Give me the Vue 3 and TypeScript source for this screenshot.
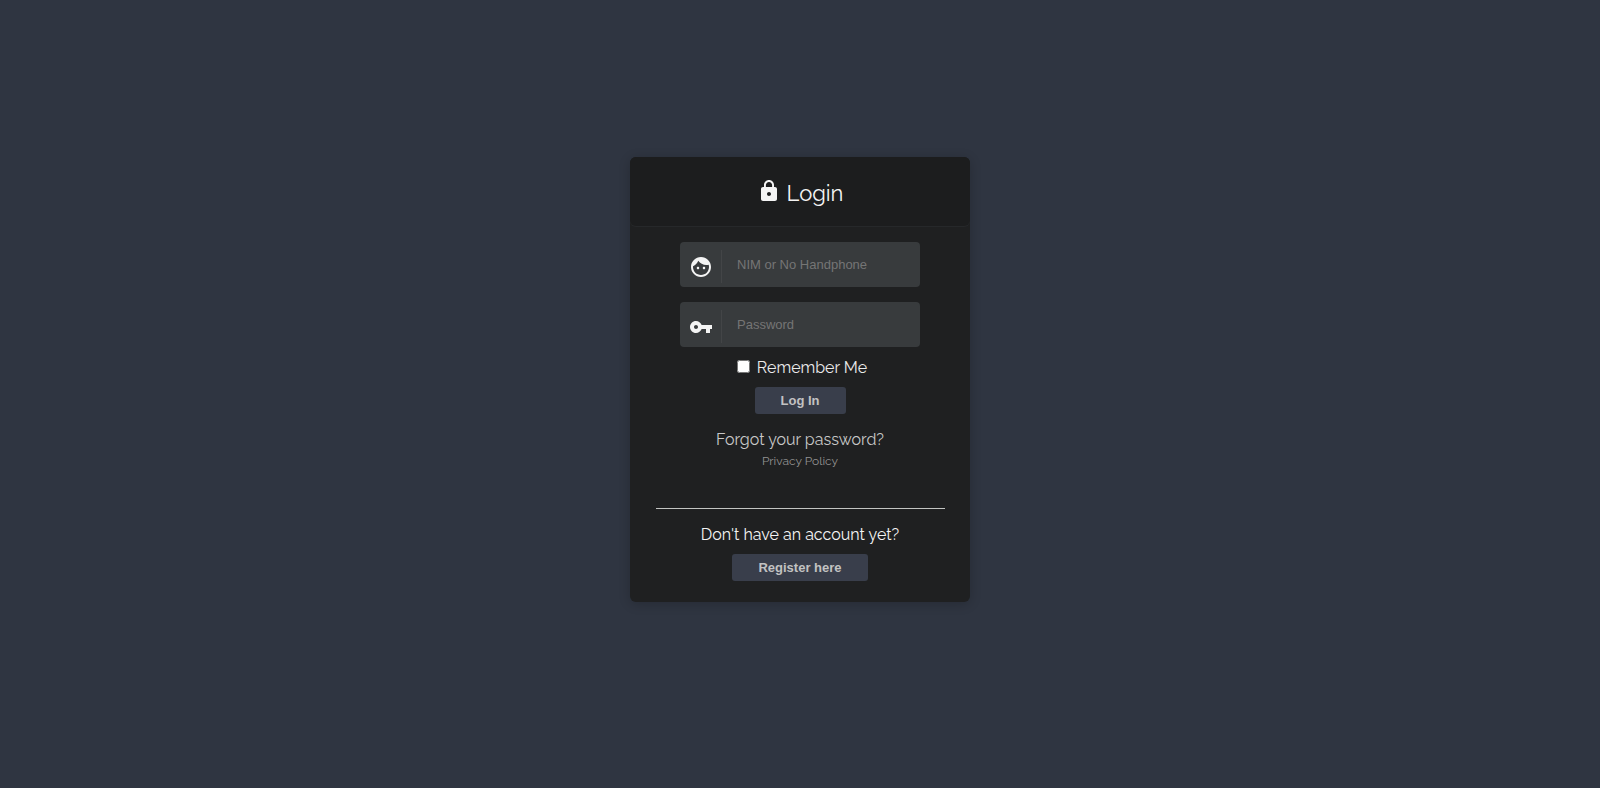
<script setup lang="ts">
import { ref } from 'vue'

const user = ref('')
const password = ref('')
const remember = ref(false)
</script>

<template>
  <main class="page">
    <section class="card">
      <header class="card-header">
        <svg class="lock" viewBox="0 0 24 24" aria-hidden="true">
          <path d="M18 8h-1V6c0-2.76-2.24-5-5-5S7 3.24 7 6v2H6c-1.1 0-2 .9-2 2v10c0 1.1.9 2 2 2h12c1.1 0 2-.9 2-2V10c0-1.1-.9-2-2-2zm-6 9c-1.1 0-2-.9-2-2s.9-2 2-2 2 .9 2 2-.9 2-2 2zm3.1-9H8.9V6c0-1.71 1.39-3.1 3.1-3.1s3.1 1.39 3.1 3.1v2z" />
        </svg>
        <h1>Login</h1>
      </header>
      <form class="login" @submit.prevent>
        <div class="field">
          <label for="user" aria-label="NIM or No Handphone">
            <svg viewBox="0 0 24 24" aria-hidden="true">
              <path d="M9 11.75c-.69 0-1.25.56-1.25 1.25s.56 1.25 1.25 1.25 1.25-.56 1.25-1.25-.56-1.25-1.25-1.25zm6 0c-.69 0-1.25.56-1.25 1.25s.56 1.25 1.25 1.25 1.25-.56 1.25-1.25-.56-1.25-1.25-1.25zM12 2C6.48 2 2 6.48 2 12s4.48 10 10 10 10-4.48 10-10S17.52 2 12 2zm0 18c-4.41 0-8-3.59-8-8 0-.29.02-.58.05-.86 2.36-1.05 4.23-2.98 5.21-5.37C11.07 8.33 14.05 10 17.42 10c.78 0 1.53-.09 2.25-.26.21.71.33 1.47.33 2.26 0 4.41-3.59 8-8 8z" />
            </svg>
          </label>
          <input id="user" v-model="user" type="text" placeholder="NIM or No Handphone" />
        </div>
        <div class="field">
          <label for="password" aria-label="Password">
            <svg viewBox="0 0 24 24" aria-hidden="true">
              <path d="M12.65 10C11.83 7.67 9.61 6 7 6c-3.31 0-6 2.69-6 6s2.69 6 6 6c2.61 0 4.83-1.67 5.65-4H17v4h4v-4h2v-4H12.65zM7 14c-1.1 0-2-.9-2-2s.9-2 2-2 2 .9 2 2-.9 2-2 2z" />
            </svg>
          </label>
          <input id="password" v-model="password" type="password" placeholder="Password" />
        </div>
        <div class="remember">
          <input id="remember" v-model="remember" type="checkbox" />
          <label for="remember">Remember Me</label>
        </div>
        <button type="submit">Log In</button>
      </form>
      <nav class="links">
        <a class="forgot" href="#forgot">Forgot your password?</a>
        <a class="privacy" href="#privacy">Privacy Policy</a>
      </nav>
      <hr />
      <div class="register">
        <p>Don't have an account yet?</p>
        <button type="button">Register here</button>
      </div>
    </section>
  </main>
</template>

<style>
body {
  background: #2f3541;
}
</style>

<style scoped>
.page {
  padding: 157px 16px 16px;
  font-family: Raleway, Lato, sans-serif;
  font-size: 16px;
  line-height: 20px;
  color: #f4f4f4;
}

.card {
  box-sizing: border-box;
  max-width: 340px;
  margin: 0 auto;
  padding-bottom: 21px;
  border-radius: 6px;
  background: #1f2021;
  box-shadow: 0 2px 12px rgba(0, 0, 0, 0.2);
}

.card-header {
  display: flex;
  justify-content: center;
  gap: 6px;
  padding: 22px 0 19px;
  border-radius: 6px;
  background: #1c1d1e;
  box-shadow: 0 1px 0 #26282a;
}

.lock {
  width: 24px;
  height: 24px;
  fill: #f4f4f4;
}

h1 {
  margin: 0;
  font-size: 22px;
  font-weight: 400;
  line-height: 28px;
}

.login {
  display: flex;
  flex-direction: column;
  align-items: center;
  padding-top: 16px;
}

.field {
  display: flex;
  align-items: center;
  width: 240px;
  height: 45px;
  margin-bottom: 15px;
  border-radius: 4px;
  background: #383b3d;
}

.field label {
  box-sizing: border-box;
  width: 42px;
  height: 33px;
  margin-top: 4px;
  padding: 5px 0 0 9px;
  border-right: 1px solid #434547;
}

.field svg {
  display: block;
  width: 24px;
  height: 24px;
  fill: #f4f4f4;
}

.field input {
  flex: 1;
  min-width: 0;
  padding: 0 15px;
  border: 0;
  outline: 0;
  background: transparent;
  color: #ebebeb;
  font: 400 13px/20px "Liberation Sans", Arial, sans-serif;
}

.field input::placeholder {
  color: #757575;
}

.remember {
  display: flex;
  align-items: flex-start;
  gap: 7px;
  margin: -4px 0 9px;
  padding-left: 4px;
  color: #ebebeb;
}

.remember input {
  width: 13px;
  height: 13px;
  margin: 2px 0 0;
}

button {
  height: 27px;
  padding: 0 26px;
  border: 0;
  border-radius: 3px;
  background: #393e4b;
  color: #c2c2c2;
  font: 700 13px/27px "Liberation Sans", Arial, sans-serif;
  cursor: pointer;
}

.links {
  display: flex;
  flex-direction: column;
  align-items: center;
  padding-top: 16px;
}

.links a {
  text-decoration: none;
}

.forgot {
  color: #c8c8c8;
}

.privacy {
  padding-top: 1px;
  color: #929292;
  font-size: 12px;
}

hr {
  width: 85%;
  height: 1px;
  margin: 37px auto 16px;
  border: 0;
  background: #c2c4c2;
}

.register {
  display: flex;
  flex-direction: column;
  align-items: center;
}

.register p {
  margin: 0 0 9px;
}
</style>
